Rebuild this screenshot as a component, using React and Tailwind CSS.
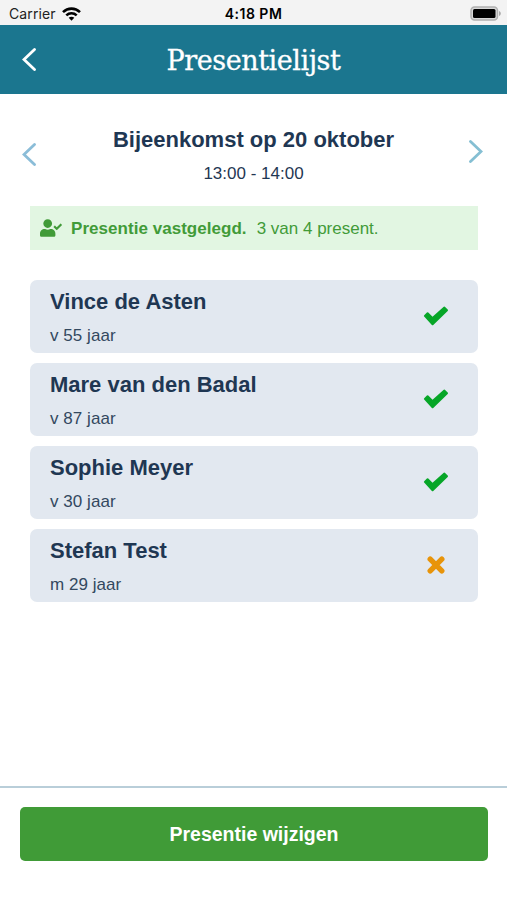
import { FaUserCheck } from "react-icons/fa";

const members = [
  { name: "Vince de Asten", info: "v 55 jaar", present: true },
  { name: "Mare van den Badal", info: "v 87 jaar", present: true },
  { name: "Sophie Meyer", info: "v 30 jaar", present: true },
  { name: "Stefan Test", info: "m 29 jaar", present: false },
];

function Chevron({ right, className }) {
  return (
    <svg width="14" height="23" viewBox="0 0 14 23" fill="none" className={className}>
      <path
        d={right ? "M1.5 1.5L12 11.5L1.5 21.5" : "M12.5 1.5L2 11.5L12.5 21.5"}
        stroke="currentColor"
        strokeWidth="2.8"
        strokeLinecap="round"
      />
    </svg>
  );
}

function StatusBar() {
  return (
    <div className="grid h-[25px] grid-cols-[1fr_auto_1fr] items-center bg-[#f3f3f3] px-[6px] font-['Inter',sans-serif] text-[14px] text-[#222]">
      <div className="flex items-center gap-[6px] pt-[2px] pl-[3px]">
        <span className="tracking-[0.1px]">Carrier</span>
        <svg width="19" height="14" viewBox="0 0 19 14" fill="none" stroke="#000" strokeWidth="2.6">
          <path d="M1 5.1C5.8 0.5 13.2 0.5 18 5.1" />
          <path d="M4.3 8.4C7.3 5.6 11.7 5.6 14.7 8.4" />
          <path d="M9.5 13.7L6.7 10.8C8.3 9.4 10.7 9.4 12.3 10.8Z" fill="#000" stroke="none" />
        </svg>
      </div>
      <span className="pt-[2px] text-center font-semibold tracking-[0.5px] text-black">4:18 PM</span>
      <div className="flex justify-end pt-[1px]">
        <svg width="31" height="15" viewBox="0 0 31 15">
          <rect x="1" y="1" width="26.5" height="13" rx="3.5" fill="#d8d8d8" stroke="#b0b0b0" strokeWidth="1.5" />
          <rect x="3" y="3" width="22.5" height="9" rx="1.5" fill="#000" />
          <path d="M29 5C31.4 6 31.4 9 29 10Z" fill="#aaa" />
        </svg>
      </div>
    </div>
  );
}

function CheckMark() {
  return (
    <svg width="26" height="20" viewBox="0 0 26 20" fill="#07a628" stroke="#07a628" strokeWidth="2" strokeLinejoin="round">
      <path d="M1.9 9.9L4.6 7.2L9.6 12.1L21.4 1.6L24 4.3L9.6 18.2Z" />
    </svg>
  );
}

function CrossMark() {
  return (
    <svg width="18" height="18" viewBox="0 0 18 18" fill="none" stroke="#e8940a" strokeWidth="5.4">
      <path d="M3.2 3.2L14.8 14.8M14.8 3.2L3.2 14.8" strokeLinecap="round" />
    </svg>
  );
}

function MemberCard({ name, info, present }) {
  return (
    <li className="flex h-[73px] items-center justify-between rounded-[7px] bg-[#e2e8f0] pr-[29px] pl-5">
      <div className="pt-[2px]">
        <h2 className="text-[22px] leading-[30px] font-bold">{name}</h2>
        <p className="mt-[7px] text-[17px] leading-6 tracking-[0.05px] text-[#33485f]">{info}</p>
      </div>
      <div className="flex w-[26px] justify-center pb-[1px]">
        {present ? <CheckMark /> : <CrossMark />}
      </div>
    </li>
  );
}

export default function App() {
  return (
    <div className="flex h-[900px] w-[507px] flex-col bg-white font-['Liberation_Sans',Arial,sans-serif] text-[#1f3753]">
      <StatusBar />

      <header className="grid h-[69px] grid-cols-[1fr_auto_1fr] items-center bg-[#1b768f] px-[22px] text-white">
        <Chevron />
        <h1 className="pt-[3px] font-['DejaVu_Serif',serif] text-[27px] tracking-[-0.45px] [-webkit-text-stroke:0.3px_white]">
          Presentielijst
        </h1>
      </header>

      <main className="flex-1 pt-[31px]">
        <div className="flex justify-between pr-[24px] pl-[22px]">
          <Chevron className="mt-[18px] text-[#8bbdd8]" />
          <div className="pl-[2px] text-center">
            <h2 className="text-[22px] leading-[30px] font-bold">Bijeenkomst op 20 oktober</h2>
            <p className="mt-[7px] text-[17px] leading-6">13:00 - 14:00</p>
          </div>
          <Chevron right className="mt-[15px] text-[#85bfd3]" />
        </div>

        <div className="mt-5 ml-[30px] flex h-11 w-[448px] items-center bg-[#e2f6e2] pl-[10px] text-[17px] text-[#419b38]">
          <FaUserCheck size={22} />
          <strong className="ml-[9px] pt-[2px] tracking-[0.04px]">Presentie vastgelegd.</strong>
          <span className="ml-[10px] pt-[2px]">3 van 4 present.</span>
        </div>

        <ul className="mt-[30px] ml-[30px] flex w-[448px] flex-col gap-[10px]">
          {members.map((m) => (
            <MemberCard key={m.name} {...m} />
          ))}
        </ul>
      </main>

      <footer className="h-[114px] border-t-2 border-[#b9ced9] pt-[19px] pl-5">
        <button className="h-[54px] w-[468px] rounded-[5px] bg-[#409b37] pt-[2px] text-[19.5px] font-bold text-white">
          Presentie wijzigen
        </button>
      </footer>
    </div>
  );
}
